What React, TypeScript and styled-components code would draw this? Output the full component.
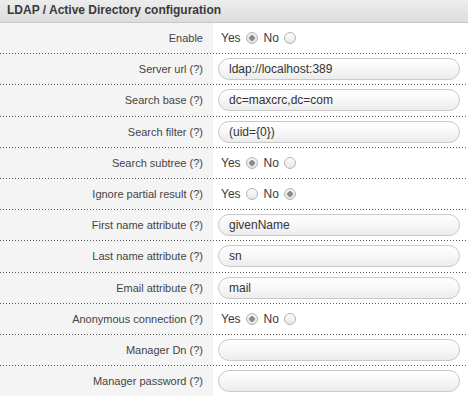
import styled, { createGlobalStyle } from "styled-components";

const GlobalStyle = createGlobalStyle`
  body {
    margin: 0;
    background: #fff;
    font-family: "Liberation Sans", Arial, sans-serif;
  }
`;

type Field =
  | { label: string; kind: "text"; value: string }
  | { label: string; kind: "bool"; value: boolean };

const fields: Field[] = [
  { label: "Enable", kind: "bool", value: true },
  { label: "Server url (?)", kind: "text", value: "ldap://localhost:389" },
  { label: "Search base (?)", kind: "text", value: "dc=maxcrc,dc=com" },
  { label: "Search filter (?)", kind: "text", value: "(uid={0})" },
  { label: "Search subtree (?)", kind: "bool", value: true },
  { label: "Ignore partial result (?)", kind: "bool", value: false },
  { label: "First name attribute (?)", kind: "text", value: "givenName" },
  { label: "Last name attribute (?)", kind: "text", value: "sn" },
  { label: "Email attribute (?)", kind: "text", value: "mail" },
  { label: "Anonymous connection (?)", kind: "bool", value: true },
  { label: "Manager Dn (?)", kind: "text", value: "" },
  { label: "Manager password (?)", kind: "text", value: "" },
];

export default function App() {
  return (
    <>
      <GlobalStyle />
      <Panel>
        <Header>LDAP / Active Directory configuration</Header>
        {fields.map((f, i) => (
          <Row key={f.label} $last={i === fields.length - 1}>
            <Label>{f.label}</Label>
            <Value>
              {f.kind === "text" ? (
                <Input>{f.value}</Input>
              ) : (
                <Choice>
                  Yes <Radio $on={f.value} /> No <Radio $on={!f.value} />
                </Choice>
              )}
            </Value>
          </Row>
        ))}
      </Panel>
    </>
  );
}

const Panel = styled.div`
  width: 468px;
  display: flex;
  flex-direction: column;
`;

const Header = styled.div`
  height: 22px;
  line-height: 21px;
  padding-left: 7px;
  font-size: 12px;
  font-weight: bold;
  color: #3a3a3a;
  background: linear-gradient(#ededed, #dcdcdc);
  border-bottom: 1px solid #c6c6c6;
`;

const Row = styled.div<{ $last: boolean }>`
  display: grid;
  grid-template-columns: 213px 1fr;
  height: 30.2px;
  padding-bottom: ${(p) => (p.$last ? 0 : 1)}px;
  background:
    ${(p) =>
      p.$last
        ? ""
        : "repeating-linear-gradient(to right, #5a5a5a 0 1px, transparent 1px 3px) bottom left / 100% 1px no-repeat,"}
    linear-gradient(to right, #f4f4f4 213px, #fff 213px);
`;

const Label = styled.div`
  display: flex;
  align-items: center;
  justify-content: flex-end;
  padding-right: 10px;
  font-size: 11px;
  color: #444;
`;

const Value = styled.div`
  display: flex;
  align-items: center;
  padding-left: 5px;
`;

const Input = styled.div`
  box-sizing: border-box;
  width: 242px;
  height: 22px;
  padding: 0 10px;
  display: flex;
  align-items: center;
  font-size: 12px;
  color: #333;
  border: 1px solid #c9c9c9;
  border-radius: 11px;
  background: linear-gradient(#ffffff, #f7f7f7 50%, #ececec);
`;

const Choice = styled.div`
  display: flex;
  align-items: center;
  gap: 5px;
  padding-left: 3px;
  font-size: 12px;
  color: #3a3a3a;
`;

const Radio = styled.span<{ $on: boolean }>`
  box-sizing: border-box;
  width: 12px;
  height: 12px;
  margin-right: 1px;
  border-radius: 50%;
  border: 1px solid #b4b4b4;
  background: ${(p) =>
    p.$on
      ? "radial-gradient(circle, #8a8a8a 0 2.5px, transparent 3px), linear-gradient(#f4f4f4, #e2e2e2)"
      : "linear-gradient(#fdfdfd, #e6e6e6)"};
`;
